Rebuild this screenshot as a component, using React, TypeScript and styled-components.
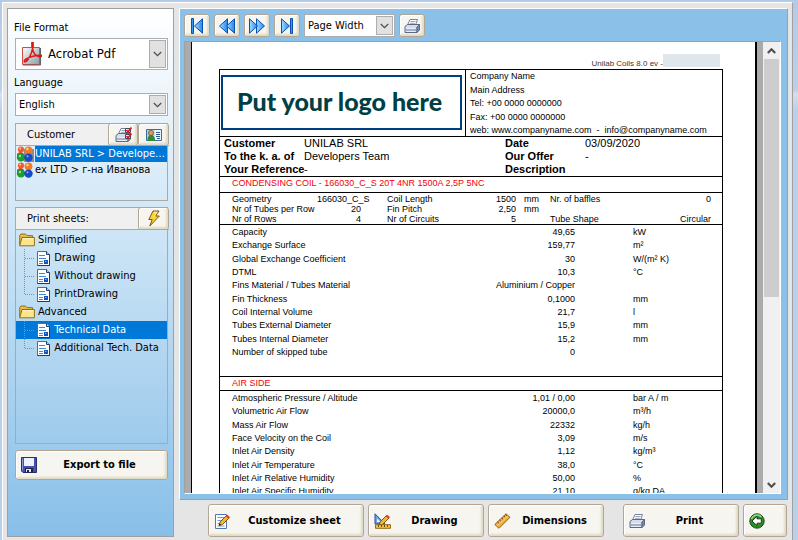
import React from "react";
import styled, { createGlobalStyle, css } from "styled-components";

const uiFont = '"DejaVu Sans Condensed", "DejaVu Sans", sans-serif';
const docFont = '"Liberation Sans", Arial, sans-serif';

const Global = createGlobalStyle`
  *, *::before, *::after { box-sizing: border-box; }
  body { margin: 0; background: #b9cfe9; }
  button, select { font: inherit; color: inherit; margin: 0; }
`;

/* ---------- shell ---------- */

const Shell = styled.div`
  height: 100vh;
  padding: 2px 5px 0 2px;
  background: linear-gradient(to bottom, #b4cbe8 0, #b9d0eb 90px, #d2e0f2 94px, #b9d0eb 110px, #b9d0eb 100%);
  font-family: ${uiFont};
  font-size: 11px;
  line-height: 14px;
  color: #000;
`;

const Frame = styled.div`
  height: 100%;
  display: flex;
  gap: 5px;
  padding: 5px 4px 3px 4px;
  background: #e5e5e5;
  border: 1px solid #fff;
  border-right-color: #a0a0a0;
  border-bottom: 0;
`;

const Sidebar = styled.aside`
  flex: 0 0 167px;
  display: flex;
  flex-direction: column;
  padding: 12px 5px 0 7px;
  border: 1px solid #a0a0a0;
  background: linear-gradient(to bottom, #fff 0%, #d3e8f7 38%, #88bfe8 100%);
`;

const Main = styled.main`
  flex: 1;
  min-width: 0;
  display: flex;
  flex-direction: column;
  gap: 4px;
`;

/* ---------- buttons ---------- */

const raised = css`
  border: 1px solid #b3a595;
  border-radius: 3px;
  background: #f6f5ef;
  box-shadow: inset 1px 1px 0 #fff, inset -2px -2px 2px #dfdbc4;
`;

const IconButton = styled.button<{ $w?: number }>`
  ${raised}
  width: ${(p) => p.$w ?? 26}px;
  height: 23px;
  padding: 0;
  display: flex;
  align-items: center;
  justify-content: center;
`;

const WideButton = styled.button<{ $w?: number; $h?: number }>`
  ${raised}
  width: ${(p) => (p.$w ? p.$w + "px" : "100%")};
  height: ${(p) => p.$h ?? 33}px;
  flex: none;
  padding: 0 5px;
  display: flex;
  align-items: center;
  font-size: 11px;
  font-weight: 700;
`;

const ButtonText = styled.span`
  flex: 1;
  text-align: center;
  white-space: nowrap;
`;

/* ---------- drop-downs ---------- */

const FieldLabel = styled.label<{ $top?: number }>`
  margin: ${(p) => p.$top ?? 0}px 0 3px -1px;
`;

const ComboBox = styled.div<{ $h: number; $w?: number }>`
  position: relative;
  height: ${(p) => p.$h}px;
  width: ${(p) => (p.$w ? p.$w + "px" : "auto")};
  flex: none;
  border: 1px solid #abadb3;
  background: #fff;
`;

const Select = styled.select<{ $pad?: number; $large?: boolean }>`
  appearance: none;
  width: 100%;
  height: 100%;
  border: 0;
  padding: 0 20px 0 ${(p) => p.$pad ?? 3}px;
  background: transparent;
  font-size: ${(p) => (p.$large ? 13 : 11)}px;
`;

const ComboArrow = styled.span`
  position: absolute;
  top: 1px;
  right: 1px;
  bottom: 1px;
  width: 17px;
  display: flex;
  align-items: center;
  justify-content: center;
  border: 1px solid #adadad;
  background: #e1e1e1;
  pointer-events: none;
`;

const ComboIcon = styled.span`
  position: absolute;
  left: 6px;
  top: 3px;
  height: 24px;
  pointer-events: none;
`;

/* ---------- sidebar groups ---------- */

const Group = styled.section<{ $grow?: boolean; $top: number }>`
  margin-top: ${(p) => p.$top}px;
  height: ${(p) => (p.$grow ? "auto" : "78px")};
  flex: ${(p) => (p.$grow ? "0 0 237px" : "none")};
  border: 1px solid #a9a9a9;
`;

const GroupHead = styled.header`
  display: flex;
  align-items: center;
  height: 22px;
  margin-right: -2px;
  background: #f0f0f0;
  border-bottom: 1px solid #a9a9a9;
`;

const GroupTitle = styled.h2`
  flex: 1;
  margin: 0;
  padding-left: 11px;
  font-size: 11px;
  font-weight: 400;
`;

const List = styled.ul`
  list-style: none;
  margin: 0;
  padding: 0;
`;

const CustomerItem = styled.button<{ $on?: boolean }>`
  display: grid;
  grid-template-columns: 19px 1fr;
  width: 100%;
  height: 16px;
  padding: 0;
  border: 0;
  background: none;
  text-align: left;
  line-height: 16px;
  color: ${(p) => (p.$on ? "#fff" : "#000")};
  > span {
    overflow: hidden;
    white-space: nowrap;
    text-overflow: ellipsis;
    background: ${(p) => (p.$on ? "#0078d7" : "transparent")};
  }
`;

const Tree = styled(List)`
  padding-top: 1px;
`;

const TreeRow = styled.button<{ $on?: boolean; $leaf?: boolean }>`
  display: flex;
  align-items: center;
  gap: ${(p) => (p.$leaf ? 1 : 3)}px;
  width: 100%;
  height: 18px;
  padding: 0 0 0 ${(p) => (p.$leaf ? 8 : 3)}px;
  border: 0;
  background: ${(p) => (p.$on ? "#0078d7" : "none")};
  color: ${(p) => (p.$on ? "#fff" : "#000")};
  white-space: nowrap;
`;

const ExportSlot = styled.div`
  margin-top: 6px;
`;

/* ---------- preview ---------- */

const Viewer = styled.section`
  flex: 1;
  min-height: 0;
  display: flex;
  flex-direction: column;
  gap: 4px;
  padding: 5px 6px 5px 4px;
  background: #8bc1e8;
  border: 1px solid #fff;
  border-right-color: #a0a0a0;
  border-bottom-color: #a0a0a0;
`;

const Toolbar = styled.div`
  display: flex;
  gap: 4px;
`;

const Scroller = styled.div`
  flex: 1;
  min-height: 0;
  display: flex;
  overflow: hidden;
  border: 1px solid #a0a0a0;
  border-right-color: #fff;
  border-bottom-color: #fff;
  background: #ababab;
`;

const Canvas = styled.div`
  flex: 1;
  min-width: 0;
  padding: 0 6px;
  overflow: hidden;
`;

const Paper = styled.article`
  border-left: 1px solid #000;
  border-right: 2px solid #000;
  background: #fff;
  padding: 15px 32px 40px 27px;
  font-family: ${docFont};
  font-size: 9px;
  line-height: 10px;
`;

const ScrollBar = styled.div`
  flex: 0 0 17px;
  display: flex;
  flex-direction: column;
  background: #f0f0f0;
  padding: 0 1px;
`;

const ScrollButton = styled.button`
  height: 17px;
  padding: 0;
  border: 0;
  background: none;
  display: flex;
  align-items: center;
  justify-content: center;
`;

const Track = styled.div`
  flex: 1;
`;

const Thumb = styled.div`
  height: 57%;
  background: #cdcdcd;
`;

const Version = styled.p`
  display: flex;
  justify-content: flex-end;
  align-items: flex-end;
  margin: 0 3px 0 0;
  height: 12px;
  font-size: 8px;
  color: #4a3424;
`;

const Masked = styled.span`
  width: 57px;
  height: 13px;
  margin-bottom: 2px;
  background: #dfe6ec;
`;

const Sheet = styled.div`
  border: 1px solid #000;
`;

const Letterhead = styled.div`
  display: grid;
  grid-template-columns: 245px 1fr;
  border-bottom: 1px solid #000;
`;

const LogoBox = styled.div`
  margin: 5px 3px 6px 1px;
  height: 55px;
  display: flex;
  align-items: center;
  justify-content: center;
  border: 2px solid #003f7f;
  padding: 0 4px 4px 0;
  font-family: Lato, sans-serif;
  font-size: 25px;
  font-weight: 900;
  line-height: 28px;
  color: #003f45;
  white-space: nowrap;
`;

const Company = styled.address`
  display: flex;
  flex-direction: column;
  justify-content: space-between;
  padding: 1px 0 1px 4px;
  border-left: 1px solid #000;
  font-style: normal;
  white-space: pre;
`;

const Reference = styled.div`
  display: grid;
  grid-template-columns: 80px 1fr 80px 137px;
  grid-auto-rows: 13px;
  padding-left: 4px;
  font-size: 11px;
  line-height: 13px;
  white-space: nowrap;
`;

const SectionTitle = styled.h3<{ $h: number }>`
  margin: 0;
  height: ${(p) => p.$h}px;
  padding: 0 0 0 12px;
  border-top: 1px solid #000;
  border-bottom: 1px solid #000;
  font-size: 9px;
  font-weight: 400;
  line-height: 12px;
  color: #f4000a;
`;

const GeometryTable = styled.table`
  table-layout: fixed;
  width: 100%;
  border-collapse: collapse;
  border-bottom: 1px solid #000;
  white-space: nowrap;
  th, td { padding: 0; height: 10px; line-height: 10px; font-weight: 400; text-align: right; }
  tr:first-child > * { height: 11px; }
  th { text-align: left; padding-left: 12px; }
  td + th { padding-left: 26px; }
  td.unit { text-align: left; padding-left: 8px; }
  td.unit + th { padding-left: 0; }
  td:last-child { padding-right: 11px; }
`;

const Col = styled.col<{ $w?: number }>`
  width: ${(p) => (p.$w ? p.$w + "px" : "auto")};
`;

const DataTable = styled.table<{ $bottom?: number }>`
  table-layout: fixed;
  width: 100%;
  border-collapse: collapse;
  margin: 1px 0 ${(p) => p.$bottom ?? 0}px;
  white-space: nowrap;
  th, td { padding: 0; height: 13px; line-height: 13px; font-weight: 400; text-align: right; }
  tr:nth-child(3n) > * { height: 14px; }
  th { text-align: left; padding-left: 12px; }
  td:last-child { text-align: left; padding-left: 58px; }
`;

const Actions = styled.footer`
  display: flex;
  justify-content: flex-end;
  gap: 4px;
  padding-right: 1px;
`;

const Spacer = styled.span`
  width: 11px;
`;

/* ---------- icons ---------- */

const Chevron = ({ up, bold }: { up?: boolean; bold?: boolean }) => (
  <svg width="9" height="6" viewBox="0 0 9 6">
    <path d={up ? "M.8 5 4.5 1.3 8.2 5" : "M.8 1 4.5 4.7 8.2 1"} fill="none" stroke="#505050" strokeWidth={bold ? 2.2 : 1.3} />
  </svg>
);

const NavIcon = ({ kind }: { kind: "first" | "prev" | "next" | "last" }) => {
  const flip = kind === "next" || kind === "last";
  const ends = kind === "first" || kind === "last";
  return (
    <svg width="18" height="18" viewBox="0 0 18 18">
      <defs>
        <linearGradient id={"nav-" + kind} x1="0" x2="1">
          <stop offset="0" stopColor={flip ? "#1f86ee" : "#a4dcff"} />
          <stop offset="1" stopColor={flip ? "#a4dcff" : "#1f86ee"} />
        </linearGradient>
      </defs>
      <g transform={flip ? "translate(18 0) scale(-1 1)" : undefined} stroke="#0a4fb4" fill={`url(#nav-${kind})`}>
        {ends ? (
          <>
            <path d="M3.5 1.5h2v15h-2z" fill="#2f9bf2" />
            <path d="M14.5 1.8v14.4L6.5 9z" />
          </>
        ) : (
          <>
            <path d="M9.5 1.8v14.4L1.5 9z" />
            <path d="M16.5 1.8v14.4L8.5 9z" />
          </>
        )}
      </g>
    </svg>
  );
};

const PrinterIcon = ({ checks }: { checks?: boolean }) => (
  <svg width="17" height="16" viewBox="0 0 17 16">
    <path d="M6 1.5h7.5L11.5 7h-8z" fill="#fff" stroke="#76839c" />
    <path d="M6.5 3.5h5M5.8 5.3h5" stroke="#98a4bb" />
    <path d="M1 8.5 3.5 6.5H15.5L13 9v5.5H1z" fill="#d5dcea" stroke="#5b6986" />
    <path d="M13 9l2.5-2.5V12L13 14.5z" fill="#7c8cab" stroke="#5b6986" />
    <path d="M2.5 11h9M2.5 13h9" stroke="#fff" />
    <path d="M2 12h10" stroke="#5e75a2" />
    {checks && (
      <>
        <path d="M10.5 1.5h5v4h-5zM10.5 7.5h5v4h-5z" fill="#fff" stroke="#3b4963" />
        <path d="m11.5 3 1.5 1.8L16.5.5M11.5 9l1.5 1.8 3.5-4.3" fill="none" stroke="#e5141b" strokeWidth="1.7" />
      </>
    )}
  </svg>
);

const CardIcon = () => (
  <svg width="16" height="14" viewBox="0 0 16 14">
    <path d="M.5 1.5h15v11H.5z" fill="#e8f4fd" stroke="#3a6ca0" />
    <path d="M1 2h7.5v10H1z" fill="#a9d3ee" />
    <path d="M1.5 13c0-5 1.5-6 3.5-6s4 1 4 6z" fill="#2f8b3e" />
    <circle cx="5" cy="5" r="2.6" fill="#d89a55" stroke="#7b4b1d" strokeWidth=".7" />
    <path d="M10 4.5h4M10 6.5h4M10 8.5h4M11 10.5h3" stroke="#305b8f" />
  </svg>
);

const BoltIcon = () => (
  <svg width="14" height="17" viewBox="0 0 14 17">
    <path d="M6 1h6L8.5 6h3.8L2.8 16l2.4-6.5H1.8z" fill="#ffd32b" stroke="#7a5711" strokeLinejoin="round" />
    <path d="M7 2.3h2.8L6.8 7" fill="none" stroke="#fff3b0" />
  </svg>
);

const PeopleIcon = ({ shade }: { shade?: boolean }) => (
  <svg width="18" height="16" viewBox="0 0 18 16">
    {shade && <path d="M8 3h10v13H8z" fill="#8c8c8c" />}
    <path d="M1 8q3.5-4 7 0v2q-3 2-7 0z" fill="#e0301e" />
    <circle cx="5" cy="3.6" r="3.1" fill="#f15a31" />
    <circle cx="4.2" cy="2.6" r="1" fill="#ffc5a2" />
    <circle cx="12.5" cy="4.3" r="3.9" fill="#f47c1c" />
    <circle cx="11.4" cy="3" r="1.2" fill="#ffd3a0" />
    <circle cx="5" cy="11.400" r="4.200" fill="#1b9d32" />
    <circle cx="4" cy="10" r="1.2" fill="#9be28f" />
    <circle cx="12.5" cy="11.600" r="4.200" fill="#1747cc" />
    <circle cx="11.5" cy="10.3" r="1.1" fill="#86abf5" />
  </svg>
);

const FolderIcon = () => (
  <svg width="16" height="14" viewBox="0 0 16 14">
    <path d="M.7 12.5V2.4L2 1h4.5L8 2.6h5.5v2" fill="#e9bd46" stroke="#8e701b" />
    <path d="M.7 12.8 3 4.5h12.4v8.3z" fill="#fbe48c" stroke="#8e701b" strokeLinejoin="round" />
    <path d="M3.8 5.7h10.5" stroke="#fff8cf" />
  </svg>
);

const PageIcon = () => (
  <svg width="13" height="15" viewBox="0 0 13 15">
    <path d="M.5.5h9l3 3v11H.5z" fill="#fff" stroke="#4a6ba3" />
    <path d="M12.500 3.500v11H.500" fill="none" stroke="#1f3866" />
    <path d="M9.5.5v3h3" fill="#b9cce8" stroke="#203d70" />
    <path d="M2 4.5h6M2 7.5h7M2 10.5h4M2 12.5h4" stroke="#3d8ad8" />
    <path d="M7 9h4v4H7z" fill="#1452c0" />
    <path d="M8 10h1.5v1H8z" fill="#77acf0" />
  </svg>
);

const TreeGuide = ({ last }: { last?: boolean }) => (
  <svg width="12" height="18" viewBox="0 0 12 18">
    <path d={last ? "M.5 0v9" : "M.5 0v18"} stroke="#8d8d8d" strokeDasharray="1 1" />
    <path d="M1 9.5h10" stroke="#8d8d8d" strokeDasharray="1 1" />
  </svg>
);

const PdfIcon = () => (
  <svg width="20" height="24" viewBox="0 0 20 24">
    <defs>
      <linearGradient id="pdf-bg" x1="0" y1="0" x2="1" y2="1">
        <stop offset="0" stopColor="#fff" />
        <stop offset="1" stopColor="#8c9ba2" />
      </linearGradient>
    </defs>
    <path d="M.5 5.500h17v17H.5z" fill="url(#pdf-bg)" stroke="#d34b45" />
    <path d="M1 23h17.5V6" fill="none" stroke="#5c6468" />
    <path d="M10.500 0v6.500C10 11 6.500 18.500 3.500 19.800c-2 .6-1.500-1.800 1-3 4-2 9-3.600 13-3.300 2.500.3 1.500 1.700-.5 1.200C13 13.500 10.500 9.500 10.500 5" fill="none" stroke="#e3150e" strokeWidth="1.500" />
    <path d="M10.500 0v5" stroke="#e3150e" strokeWidth="2.600" />
    <path d="M16 13.800h4" stroke="#e3150e" strokeWidth="2.400" />
  </svg>
);

const FloppyIcon = () => (
  <svg width="16" height="16" viewBox="0 0 16 16">
    <path d="M.5.5h15v15H2L.5 14z" fill="#4550b0" stroke="#2a2f66" />
    <path d="M3 1h10v8H3z" fill="#eef2fc" />
    <path d="M1.500 1.500v12" stroke="#8b95e0" />
    <path d="M4 11h8v4.500H4z" fill="#1d214a" />
    <path d="M5 12h5v3H5z" fill="#e4e9f0" />
    <path d="M6 13h2v2H6z" fill="#222" />
  </svg>
);

const Pencil = () => (
  <g>
    <path d="M5 12.500 6 9l6.500-6.500L15 5 8.500 11.500z" fill="#f6b52c" stroke="#6a4712" strokeWidth=".9" />
    <path d="m11.800 3.200 1.500-1.500L16 4.200l-1.500 1.500z" fill="#e23a2c" />
    <path d="M5 12.500 5.600 10.500l1.400 1.400z" fill="#111" />
  </g>
);

const EditIcon = () => (
  <svg width="17" height="16" viewBox="0 0 17 16">
    <path d="M1.500 1.500h11v14h-11z" fill="#fff" stroke="#5177ac" />
    <path d="M3.500 4.500h7M3.500 7.500h5M3.500 10.500h2M3.500 13h7" stroke="#6f9fd6" />
    <Pencil />
  </svg>
);

const DraftIcon = () => (
  <svg width="17" height="16" viewBox="0 0 17 16">
    <path d="M1 .8V11h10z" fill="#6f9fe5" stroke="#2450a6" />
    <path d="M3 5.500V9h3.500z" fill="#f2f6ff" />
    <Pencil />
    <path d="M1.500 11.700h15v3.600h-15z" fill="#f3c34c" stroke="#94681a" />
    <path d="M4.500 12v2M7.500 12v2M10.500 12v2M13.500 12v2" stroke="#6f4d10" />
  </svg>
);

const RulerIcon = () => (
  <svg width="17" height="16" viewBox="0 0 17 16">
    <path d="M.8 11.500 12 .8l4 3.500L5 15.300z" fill="#f1ad37" stroke="#94611a" strokeLinejoin="round" />
    <path d="m3.500 9 1.700 1.500M5.600 7l1.200 1M7.700 5l1.700 1.500M9.800 3l1.200 1M11.500 1.500 13 3" stroke="#7b4d10" />
    <path d="M3 12.800 14 2.800" stroke="#ffd982" />
  </svg>
);

const BackIcon = () => (
  <svg width="16" height="16" viewBox="0 0 16 16">
    <circle cx="8" cy="8" r="7.200" fill="#2c8c25" stroke="#174e14" />
    <path d="M2.500 6a6 6 0 0 1 10-2" fill="none" stroke="#9bd88d" strokeWidth="1.500" />
    <path d="M3 8 8 3.300v2.500h4.300v4.400H8v2.500z" fill="#fff" stroke="#1f3c1c" strokeLinejoin="round" />
  </svg>
);

/* ---------- data ---------- */

const tree = [
  { name: "Simplified", items: ["Drawing", "Without drawing", "PrintDrawing"] },
  { name: "Advanced", items: ["Technical Data", "Additional Tech. Data"] },
];

const coilRows = [
  ["Capacity", "49,65", "kW"],
  ["Exchange Surface", "159,77", "m²"],
  ["Global Exchange Coefficient", "30", "W/(m² K)"],
  ["DTML", "10,3", "°C"],
  ["Fins Material / Tubes Material", "Aluminium / Copper", ""],
  ["Fin Thickness", "0,1000", "mm"],
  ["Coil Internal Volume", "21,7", "l"],
  ["Tubes External Diameter", "15,9", "mm"],
  ["Tubes Internal Diameter", "15,2", "mm"],
  ["Number of skipped tube", "0", ""],
];

const airRows = [
  ["Atmospheric Pressure / Altitude", "1,01 / 0,00", "bar A / m"],
  ["Volumetric Air Flow", "20000,0", "m³/h"],
  ["Mass Air Flow", "22332", "kg/h"],
  ["Face Velocity on the Coil", "3,09", "m/s"],
  ["Inlet Air Density", "1,12", "kg/m³"],
  ["Inlet Air Temperature", "38,0", "°C"],
  ["Inlet Air Relative Humidity", "50,00", "%"],
  ["Inlet Air Specific Humidity", "21,10", "g/kg DA"],
];

const Data = ({ rows, bottom }: { rows: string[][]; bottom?: number }) => (
  <DataTable $bottom={bottom}>
    <colgroup>
      <Col />
      <Col $w={120} />
      <Col $w={147} />
    </colgroup>
    <tbody>
      {rows.map(([name, value, unit]) => (
        <tr key={name}>
          <th scope="row">{name}</th>
          <td>{value}</td>
          <td>{unit}</td>
        </tr>
      ))}
    </tbody>
  </DataTable>
);

export default function App() {
  const [sheet, setSheet] = React.useState("Technical Data");
  const [customer, setCustomer] = React.useState(0);
  const customers = ["UNILAB SRL > Developers Team", "ex LTD > г-на Иванова"];

  return (
    <>
      <Global />
      <Shell>
        <Frame>
          <Sidebar>
            <FieldLabel htmlFor="format">File Format</FieldLabel>
            <ComboBox $h={32}>
              <Select id="format" $pad={32} $large>
                <option>Acrobat Pdf</option>
              </Select>
              <ComboIcon><PdfIcon /></ComboIcon>
              <ComboArrow><Chevron /></ComboArrow>
            </ComboBox>
            <FieldLabel htmlFor="language" $top={6}>Language</FieldLabel>
            <ComboBox $h={23}>
              <Select id="language">
                <option>English</option>
              </Select>
              <ComboArrow><Chevron /></ComboArrow>
            </ComboBox>

            <Group $top={7}>
              <GroupHead>
                <GroupTitle>Customer</GroupTitle>
                <IconButton $w={30} aria-label="Print customers"><PrinterIcon checks /></IconButton>
                <IconButton $w={31} aria-label="Customer card"><CardIcon /></IconButton>
              </GroupHead>
              <List>
                {customers.map((name, i) => (
                  <li key={name}>
                    <CustomerItem $on={customer === i} onClick={() => setCustomer(i)}>
                      <PeopleIcon shade={customer === i} />
                      <span>{name}</span>
                    </CustomerItem>
                  </li>
                ))}
              </List>
            </Group>

            <Group $top={6} $grow>
              <GroupHead>
                <GroupTitle>Print sheets:</GroupTitle>
                <IconButton $w={31} aria-label="Quick print"><BoltIcon /></IconButton>
              </GroupHead>
              <Tree>
                {tree.map((branch) => (
                  <li key={branch.name}>
                    <TreeRow><FolderIcon />{branch.name}</TreeRow>
                    <List>
                      {branch.items.map((item, i) => (
                        <li key={item}>
                          <TreeRow $leaf $on={sheet === item} onClick={() => setSheet(item)}>
                            <TreeGuide last={i === branch.items.length - 1} />
                            <PageIcon />
                            <span>&nbsp;{item}</span>
                          </TreeRow>
                        </li>
                      ))}
                    </List>
                  </li>
                ))}
              </Tree>
            </Group>

            <ExportSlot>
              <WideButton $h={30}><FloppyIcon /><ButtonText>Export to file</ButtonText></WideButton>
            </ExportSlot>
          </Sidebar>

          <Main>
            <Viewer>
              <Toolbar>
                <IconButton aria-label="First page"><NavIcon kind="first" /></IconButton>
                <IconButton aria-label="Previous page"><NavIcon kind="prev" /></IconButton>
                <IconButton aria-label="Next page"><NavIcon kind="next" /></IconButton>
                <IconButton aria-label="Last page"><NavIcon kind="last" /></IconButton>
                <ComboBox $h={23} $w={91}>
                  <Select aria-label="Zoom">
                    <option>Page Width</option>
                  </Select>
                  <ComboArrow><Chevron /></ComboArrow>
                </ComboBox>
                <IconButton aria-label="Print"><PrinterIcon /></IconButton>
              </Toolbar>

              <Scroller>
                <Canvas>
                  <Paper>
                    <Version>Unilab Coils 8.0 ev -<Masked /></Version>
                    <Sheet>
                      <Letterhead>
                        <LogoBox>Put your logo here</LogoBox>
                        <Company>
                          <span>Company Name</span>
                          <span>Main Address</span>
                          <span>Tel: +00 0000 0000000</span>
                          <span>Fax: +00 0000 0000000</span>
                          <span>{"web: www.companyname.com  -  info@companyname.com"}</span>
                        </Company>
                      </Letterhead>
                      <Reference>
                        <b>Customer</b><span>UNILAB SRL</span><b>Date</b><span>03/09/2020</span>
                        <b>To the k. a. of</b><span>Developers Team</span><b>Our Offer</b><span>-</span>
                        <b>Your Reference</b><span>-</span><b>Description</b><span />
                      </Reference>
                      <SectionTitle $h={17}>CONDENSING COIL - 166030_C_S 20T 4NR 1500A 2,5P 5NC</SectionTitle>
                      <GeometryTable>
                        <colgroup>
                          <Col $w={97} /><Col $w={44} /><Col $w={100} /><Col $w={55} />
                          <Col $w={34} /><Col $w={80} /><Col />
                        </colgroup>
                        <tbody>
                          <tr>
                            <th scope="row">Geometry</th><td>166030_C_S</td>
                            <th scope="row">Coil Length</th><td>1500</td><td className="unit">mm</td>
                            <th scope="row">Nr. of baffles</th><td>0</td>
                          </tr>
                          <tr>
                            <th scope="row">Nr of Tubes per Row</th><td>20</td>
                            <th scope="row">Fin Pitch</th><td>2,50</td><td className="unit">mm</td>
                            <th /><td />
                          </tr>
                          <tr>
                            <th scope="row">Nr of Rows</th><td>4</td>
                            <th scope="row">Nr of Circuits</th><td>5</td><td className="unit" />
                            <th scope="row">Tube Shape</th><td>Circular</td>
                          </tr>
                        </tbody>
                      </GeometryTable>
                      <Data rows={coilRows} bottom={17} />
                      <SectionTitle $h={15}>AIR SIDE</SectionTitle>
                      <Data rows={airRows} />
                    </Sheet>
                  </Paper>
                </Canvas>
                <ScrollBar>
                  <ScrollButton aria-label="Scroll up"><Chevron up bold /></ScrollButton>
                  <Track><Thumb /></Track>
                  <ScrollButton aria-label="Scroll down"><Chevron bold /></ScrollButton>
                </ScrollBar>
              </Scroller>
            </Viewer>

            <Actions>
              <WideButton $w={156}><EditIcon /><ButtonText>Customize sheet</ButtonText></WideButton>
              <WideButton $w={116}><DraftIcon /><ButtonText>Drawing</ButtonText></WideButton>
              <WideButton $w={116}><RulerIcon /><ButtonText>Dimensions</ButtonText></WideButton>
              <Spacer />
              <WideButton $w={116}><PrinterIcon /><ButtonText>Print</ButtonText></WideButton>
              <WideButton $w={44} aria-label="Back"><BackIcon /></WideButton>
            </Actions>
          </Main>
        </Frame>
      </Shell>
    </>
  );
}
